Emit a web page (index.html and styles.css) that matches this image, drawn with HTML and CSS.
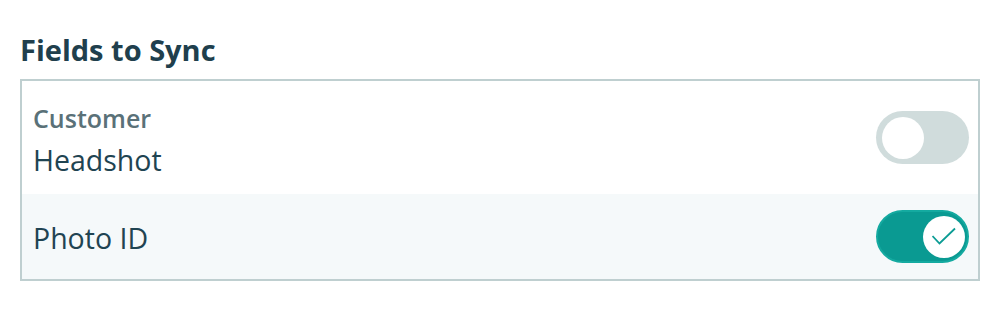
FILE: index.html
```html
<!DOCTYPE html>
<html>
<head>
<meta charset="utf-8">
<link rel="stylesheet" href="styles.css">
</head>
<body>
<div class="panel">
  <h2 class="title">Fields to Sync</h2>
  <div class="box">
    <div class="row">
      <div class="label first">
        <div class="group">Customer</div>
        <div class="name spaced">Headshot</div>
      </div>
      <div class="toggle off"><span class="knob"></span></div>
    </div>
    <div class="row alt">
      <div class="label second">
        <div class="name">Photo ID</div>
      </div>
      <div class="toggle on"><span class="knob"><svg width="24" height="24" viewBox="0 0 24 24"><path d="M0.5 11 L7.5 18.5 L23 3.5" fill="none" stroke="#0b9c94" stroke-width="1.8"/></svg></span></div>
    </div>
  </div>
</div>
</body>
</html>
```
FILE: styles.css
```css
html, body {
  margin: 0;
  padding: 0;
  background: #ffffff;
}
body {
  font-family: "Open Sans", "Noto Sans", sans-serif;
  color: #1f4452;
}
.panel {
  padding: 30px 19px 0 20px;
}
.title {
  margin: 0 0 9px 0;
  font-size: 29px;
  line-height: 40px;
  font-weight: 700;
  color: #203f4d;
}
.box {
  border: 2px solid #bfcfd0;
}
.row {
  display: flex;
  align-items: center;
  justify-content: space-between;
  padding: 0 9px 0 11px;
  height: 113px;
}
.row.alt {
  background: #f5f9fa;
  height: 85px;
}
.label.first {
  margin-top: 6px;
}
.label.second {
  margin-top: 3px;
}
.group {
  font-size: 25px;
  line-height: 32px;
  font-weight: 600;
  color: #5a7178;
}
.name {
  font-size: 28.5px;
  line-height: 38px;
  color: #1f4452;
}
.name.spaced {
  margin-top: 7.6px;
}
.toggle {
  box-sizing: border-box;
  width: 93px;
  height: 53px;
  border-radius: 27px;
  display: flex;
  align-items: center;
  padding: 0 6px;
}
.toggle.off {
  background: #d0dcdc;
}
.toggle.on {
  background: #0a9a92;
  border: 2px solid #14aaa0;
  justify-content: flex-end;
  padding: 0 2px;
}
.knob {
  width: 42px;
  height: 42px;
  border-radius: 50%;
  background: #ffffff;
  display: flex;
  align-items: center;
  justify-content: center;
}
```
